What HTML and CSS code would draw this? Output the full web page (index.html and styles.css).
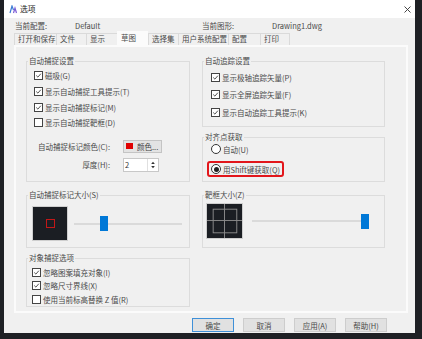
FILE: index.html
```html
<!DOCTYPE html>
<html lang="zh-CN">
<head>
  <meta charset="UTF-8">
  <title>选项</title>
  <link rel="stylesheet" href="styles.css">
</head>
<body>
  <div class="window">
    <div class="titlebar">
      <svg class="app-icon" viewBox="0 0 8 9">
        <path d="M1 8 L3 1 L4.5 5" stroke="#3a7bd5" stroke-width="1.2" fill="none"/>
        <path d="M4.5 8 L6 3 L7.5 8" stroke="#7b5cd6" stroke-width="1.2" fill="none"/>
      </svg>
      <span class="title">选项</span>
      <svg class="close" viewBox="0 0 7 7">
        <path d="M0.5 0.5 L6.5 6.5 M6.5 0.5 L0.5 6.5" stroke="#333" stroke-width="0.9"/>
      </svg>
    </div>

    <div class="info">
      <span>当前配置:</span><span>Default</span>
      <span>当前图形:</span><span>Drawing1.dwg</span>
    </div>

    <div class="tabs">
      <div class="tab">打开和保存</div>
      <div class="tab">文件</div>
      <div class="tab">显示</div>
      <div class="tab active">草图</div>
      <div class="tab">选择集</div>
      <div class="tab">用户系统配置</div>
      <div class="tab">配置</div>
      <div class="tab">打印</div>
    </div>

    <div class="panel">
      <div class="col col-left">
        <fieldset class="group snap">
          <legend>自动捕捉设置</legend>
          <div class="checks">
            <label class="check"><span class="cb"><svg viewBox="0 0 9 9"><path d="M1.6 4.5 L3.7 6.6 L7.5 2.2"/></svg></span>磁吸(G)</label>
            <label class="check"><span class="cb"><svg viewBox="0 0 9 9"><path d="M1.6 4.5 L3.7 6.6 L7.5 2.2"/></svg></span>显示自动捕捉工具提示(T)</label>
            <label class="check"><span class="cb"><svg viewBox="0 0 9 9"><path d="M1.6 4.5 L3.7 6.6 L7.5 2.2"/></svg></span>显示自动捕捉标记(M)</label>
            <label class="check"><span class="cb"></span>显示自动捕捉靶框(D)</label>
          </div>
          <div class="color-grid">
            <span class="lbl">自动捕捉标记颜色(C):</span>
            <button class="color-btn"><i class="swatch"></i>颜色...</button>
            <span class="lbl">厚度(H):</span>
            <span class="spin">
              <span class="spin-val">2</span>
              <svg class="spin-arrows" viewBox="0 0 11 12">
                <path d="M3.5 5 L5.5 2.5 L7.5 5 Z M3.5 7 L5.5 9.5 L7.5 7 Z" fill="#333"/>
              </svg>
            </span>
          </div>
        </fieldset>

        <fieldset class="group marker-size">
          <legend>自动捕捉标记大小(S)</legend>
          <div class="slider-row">
            <div class="preview">
              <i class="marker"></i>
            </div>
            <div class="slider slider-size">
              <div class="track"></div>
              <div class="thumb" style="left: 24%"></div>
            </div>
          </div>
        </fieldset>

        <fieldset class="group objsnap">
          <legend>对象捕捉选项</legend>
          <div class="checks">
            <label class="check"><span class="cb"><svg viewBox="0 0 9 9"><path d="M1.6 4.5 L3.7 6.6 L7.5 2.2"/></svg></span>忽略图案填充对象(I)</label>
            <label class="check"><span class="cb"><svg viewBox="0 0 9 9"><path d="M1.6 4.5 L3.7 6.6 L7.5 2.2"/></svg></span>忽略尺寸界线(X)</label>
            <label class="check"><span class="cb"></span>使用当前标高替换 Z 值(R)</label>
          </div>
        </fieldset>
      </div>

      <div class="col col-right">
        <fieldset class="group tracking">
          <legend>自动追踪设置</legend>
          <div class="checks">
            <label class="check"><span class="cb"><svg viewBox="0 0 9 9"><path d="M1.6 4.5 L3.7 6.6 L7.5 2.2"/></svg></span>显示极轴追踪矢量(P)</label>
            <label class="check"><span class="cb"><svg viewBox="0 0 9 9"><path d="M1.6 4.5 L3.7 6.6 L7.5 2.2"/></svg></span>显示全屏追踪矢量(F)</label>
            <label class="check"><span class="cb"><svg viewBox="0 0 9 9"><path d="M1.6 4.5 L3.7 6.6 L7.5 2.2"/></svg></span>显示自动追踪工具提示(K)</label>
          </div>
        </fieldset>

        <fieldset class="group align">
          <legend>对齐点获取</legend>
          <div class="radios">
            <label class="radio"><span class="rb"></span>自动(U)</label>
            <label class="radio highlight"><span class="rb on"></span>用Shift键获取(Q)</label>
          </div>
        </fieldset>

        <fieldset class="group aperture">
          <legend>靶框大小(Z)</legend>
          <div class="slider-row">
            <div class="preview preview-ap">
              <svg viewBox="0 0 37 36">
                <rect x="6.5" y="5.5" width="25" height="25" fill="none" stroke="#8c8c8c" stroke-width="1"/>
                <path d="M18.5 0 V36 M0 17.5 H37" stroke="#8c8c8c" stroke-width="1"/>
              </svg>
            </div>
            <div class="slider slider-ap">
              <div class="track"></div>
              <div class="thumb" style="left: 93%"></div>
            </div>
          </div>
        </fieldset>
      </div>
    </div>

    <div class="buttons">
      <button class="btn default">确定</button>
      <button class="btn">取消</button>
      <button class="btn">应用(A)</button>
      <button class="btn">帮助(H)</button>
    </div>
  </div>
</body>
</html>
```

FILE: styles.css
```css
* {
  box-sizing: border-box;
}
body {
  margin: 0;
  height: 339px;
  overflow: hidden;
  background: #1e2024;
  font-family: "Noto Sans CJK SC", "Noto Sans", sans-serif;
  font-size: 7.5px;
  color: #4a4a4a;
}
.window {
  margin-left: 4px;
  width: 411px;
  height: 333px;
  background: #f0f0f0;
}

/* title bar */
.titlebar {
  height: 18px;
  background: #fff;
  display: flex;
  align-items: center;
  padding: 0 4px 0 5px;
}
.app-icon {
  width: 8px;
  height: 9px;
}
.title {
  margin-left: 3px;
  font-size: 7.8px;
  line-height: 10px;
  color: #222;
}
.close {
  margin-left: auto;
  width: 7px;
  height: 7px;
}

/* current profile / drawing */
.info {
  display: grid;
  grid-template-columns: 60px 127px 70px auto;
  height: 13px;
  padding: 3px 0 0 11px;
  line-height: 10px;
}

/* tabs */
.tabs {
  display: flex;
  align-items: flex-end;
  height: 14px;
  padding-left: 10px;
}
.tab {
  height: 12px;
  line-height: 10px;
  padding-left: 3px;
  border-top: 1px solid #dadada;
  border-left: 1px solid #dadada;
  white-space: nowrap;
}
.tab:last-child {
  border-right: 1px solid #dadada;
}
.tab:nth-child(1) { width: 42px; }
.tab:nth-child(2) { width: 30px; }
.tab:nth-child(3) { width: 31px; }
.tab:nth-child(4) { width: 31px; }
.tab:nth-child(5) { width: 30px; }
.tab:nth-child(6) { width: 50px; }
.tab:nth-child(7) { width: 32px; }
.tab:nth-child(8) { width: 30px; }
.tab.active {
  height: 14px;
  line-height: 12px;
  padding-left: 3px;
  background: #fbfbfb;
  border-color: #fbfbfb;
}

/* tab page */
.panel {
  margin-left: 10px;
  width: 394px;
  height: 268px;
  border: 2px solid #fbfbfb;
  padding: 9px 0 0 10px;
  display: flex;
  gap: 12px;
}
.col {
  display: flex;
  flex-direction: column;
}
.col-left {
  width: 164px;
}
.col-right {
  width: 183px;
}

.group {
  margin: 0;
  padding: 0;
  min-width: 0;
  border: 1px solid #dcdcdc;
}
.group legend {
  margin-left: 1px;
  padding: 0 1px;
  line-height: 10px;
  white-space: nowrap;
}
.snap { height: 126px; }
.marker-size { height: 58px; margin-top: 8px; }
.objsnap { height: 54px; margin-top: 5px; }
.tracking { height: 71px; }
.align { height: 50px; margin-top: 5px; }
.aperture { height: 58px; margin-top: 8px; }

/* checkboxes */
.check {
  display: flex;
  align-items: center;
  gap: 2px;
  white-space: nowrap;
}
.cb {
  width: 9px;
  height: 9px;
  border: 1px solid #444;
  background: #fff;
  display: flex;
}
.cb svg {
  width: 7px;
  height: 7px;
}
.cb path {
  fill: none;
  stroke: #333;
  stroke-width: 1.1;
}
.snap .checks {
  padding: 2px 0 0 7px;
}
.snap .check {
  height: 15.7px;
}
.tracking .checks {
  padding: 2.5px 0 0 8px;
}
.tracking .check {
  height: 17.5px;
}
.objsnap .checks {
  padding: 3px 0 0 5px;
}
.objsnap .check {
  height: 13.3px;
}

/* colour + thickness */
.color-grid {
  display: grid;
  grid-template-columns: 76px 39px;
  grid-template-rows: 13px 14px;
  column-gap: 13px;
  row-gap: 5px;
  margin-top: 9px;
  padding-left: 7px;
}
.lbl {
  text-align: right;
  line-height: 13px;
  white-space: nowrap;
}
.lbl:nth-of-type(2) {
  line-height: 14px;
}
.color-btn {
  display: flex;
  align-items: center;
  padding: 0 0 0 2px;
  font: inherit;
  color: #444;
  background: #e3e3e3;
  border: 1px solid #c4c4c4;
}
.swatch {
  width: 7px;
  height: 6px;
  background: #e00000;
  margin-right: 4px;
}
.spin {
  width: 36px;
  display: flex;
  background: #fff;
  border: 1px solid #c8c8c8;
}
.spin-val {
  flex: 1;
  padding-left: 1px;
  line-height: 12px;
  color: #333;
}
.spin-arrows {
  width: 11px;
  height: 12px;
  border-left: 1px solid #e0e0e0;
}

/* radios */
.radios {
  padding-left: 8px;
}
.radio {
  display: flex;
  align-items: center;
  gap: 2px;
  height: 14px;
  white-space: nowrap;
}
.radio.highlight {
  display: inline-flex;
  height: 16px;
  margin-top: 5px;
  margin-left: -4px;
  padding: 0 2px 0 2px;
  border: 2px solid #e2161b;
  border-radius: 3px;
}
.rb {
  width: 10px;
  height: 10px;
  border: 1px solid #333;
  border-radius: 50%;
  background: #fff;
  display: flex;
  align-items: center;
  justify-content: center;
}
.rb.on::after {
  content: "";
  width: 5px;
  height: 5px;
  border-radius: 50%;
  background: #222;
}

/* size previews and sliders */
.slider-row {
  display: flex;
  align-items: center;
}
.marker-size .slider-row {
  padding: 6px 0 0 5px;
}
.aperture .slider-row {
  padding: 3px 0 0 3px;
}
.preview {
  width: 36px;
  height: 35px;
  background: #1b1e23;
  border: 1px solid #cfcfcf;
  display: flex;
  align-items: center;
  justify-content: center;
}
.marker {
  width: 9px;
  height: 9px;
  border: 1px solid #c21818;
}
.preview-ap {
  width: 37px;
  height: 36px;
}
.preview-ap svg {
  width: 35px;
  height: 34px;
}
.slider {
  position: relative;
  height: 15px;
  display: flex;
  align-items: center;
}
.slider-size {
  width: 108px;
  margin-left: 6px;
}
.slider-ap {
  width: 117px;
  margin-left: 9px;
}
.track {
  width: 100%;
  height: 2px;
  background: #dadada;
}
.thumb {
  position: absolute;
  top: 0;
  width: 8px;
  height: 15px;
  background: #0078d7;
}

/* dialog buttons */
.buttons {
  display: flex;
  justify-content: flex-end;
  gap: 9px;
  padding: 5px 28px 0 0;
}
.btn {
  width: 42px;
  height: 14px;
  padding: 0;
  font: inherit;
  color: #4a4a4a;
  background: #e1e1e1;
  border: 1px solid #cdcdcd;
}
.btn.default {
  border-color: #3f90d8;
}
```
